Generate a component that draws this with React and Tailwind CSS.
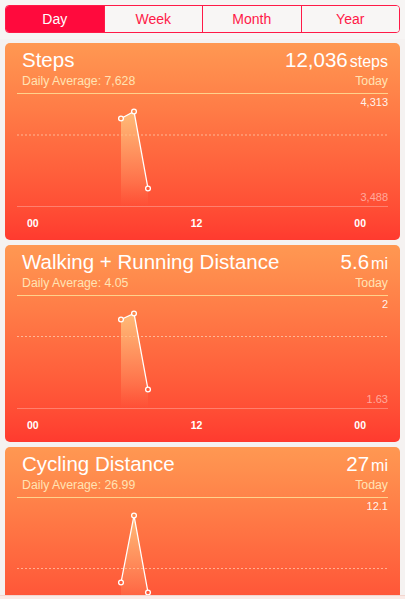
import React from "react";

const cards = [
  {
    title: "Steps",
    avg: "Daily Average: 7,628",
    value: "12,036",
    unit: "steps",
    max: "4,313",
    min: "3,488",
    pts: [
      [104, 24.5, "#ff8a4c"],
      [117, 17.5, "#ff8c4d"],
      [131, 94.5, "#ff5a3a"],
    ],
    dash: 41,
  },
  {
    title: "Walking + Running Distance",
    avg: "Daily Average: 4.05",
    value: "5.6",
    unit: "mi",
    max: "2",
    min: "1.63",
    pts: [
      [104, 23.5, "#ff8a4c"],
      [117, 17.5, "#ff8c4d"],
      [131, 93.5, "#ff5a3a"],
    ],
    dash: 40.5,
  },
  {
    title: "Cycling Distance",
    avg: "Daily Average: 26.99",
    value: "27",
    unit: "mi",
    max: "12.1",
    min: "",
    pts: [
      [104, 84.5, "#ff5f3c"],
      [117, 17.5, "#ff8c4d"],
      [131, 94.5, "#ff5a3a"],
    ],
    dash: 70.5,
  },
];

function Chart({ pts, dash, id }) {
  const line = pts.map((p) => `${p[0]},${p[1]}`).join(" ");
  const area = `${pts[0][0]},112 ${line} ${pts[pts.length - 1][0]},112`;
  return (
    <svg
      className="absolute inset-0"
      width="371"
      height="113"
      viewBox="0 0 371 113"
    >
      <defs>
        <linearGradient id={`g${id}`} x1="0" y1="0" x2="0" y2="1">
          <stop offset="0" stopColor="#ffc680" stopOpacity="0.85" />
          <stop offset="0.75" stopColor="#ffb27a" stopOpacity="0.25" />
          <stop offset="1" stopColor="#ffa070" stopOpacity="0" />
        </linearGradient>
      </defs>
      <line
        x1="0"
        y1={dash}
        x2="371"
        y2={dash}
        stroke="rgba(255,240,220,0.55)"
        strokeWidth="1"
        strokeDasharray="2 2"
      />
      <polygon points={area} fill={`url(#g${id})`} />
      <polyline points={line} fill="none" stroke="#ffffff" strokeWidth="1.3" />
      {pts.map((p, i) => (
        <circle
          key={i}
          cx={p[0]}
          cy={p[1]}
          r="2.4"
          fill={p[2]}
          stroke="#ffffff"
          strokeWidth="1.3"
        />
      ))}
    </svg>
  );
}

function Card({ c, id }) {
  return (
    <div className="shrink-0 h-[197px] rounded-[5px] bg-linear-to-b from-[#ff9852] via-[#ff6d41] to-[#ff3a2f] flex flex-col">
      <div className="mx-3 pt-[7px] pb-[5px] border-b border-[#ffd28c]">
        <div className="flex items-baseline justify-between pl-[5px]">
          <span className="text-[20.5px] leading-[20px] text-white">{c.title}</span>
          <span className="flex items-baseline gap-[2px] text-white">
            <span className="text-[20.5px] leading-[20px]">{c.value}</span>
            <span className="text-[16px] leading-[20px]">{c.unit}</span>
          </span>
        </div>
        <div className="mt-[2px] flex justify-between pl-[5px] text-[12.3px] leading-[14px] text-[#ffe3b4]">
          <span>{c.avg}</span>
          <span>Today</span>
        </div>
      </div>
      <div className="mx-3 relative h-[113px] border-b border-[rgba(255,255,255,0.28)] flex flex-col justify-between items-end pt-[3px] pb-[3px]">
        <Chart pts={c.pts} dash={c.dash} id={id} />
        <span className="relative text-[11px] leading-[11px] text-[rgba(255,255,255,0.92)]">
          {c.max}
        </span>
        <span className="relative text-[11px] leading-[11px] text-[rgba(255,255,255,0.5)]">
          {c.min}
        </span>
      </div>
      <div className="flex-1 flex items-center justify-between pl-[22px] pr-[34px] text-[10.5px] font-bold text-white">
        <span>00</span>
        <span>12</span>
        <span>00</span>
      </div>
    </div>
  );
}

export default function App() {
  const tabs = ["Day", "Week", "Month", "Year"];
  return (
    <div
      className="w-[405px] h-[599px] overflow-hidden bg-[#f5f2f1] flex flex-col"
      style={{ fontFamily: '"Liberation Sans", Arial, sans-serif' }}
    >
      <div className="flex-1 overflow-hidden flex flex-col">
        <div className="pt-[5px] px-[5px] bg-[#f7f5f4]">
          <div className="h-[28px] flex rounded-[4px] border border-[#ff1a47] overflow-hidden">
            {tabs.map((t, i) => (
              <div
                key={t}
                className={
                  i === 0
                    ? "flex-1 flex items-center justify-center bg-[#ff0a3d] text-white text-[14px]"
                    : "flex-1 flex items-center justify-center border-l border-[#ff1a47] bg-[#f8f6f5] text-[#ff1a47] text-[14px]"
                }
              >
                {t}
              </div>
            ))}
          </div>
          <div className="h-[6px]" />
        </div>
        <div className="h-px bg-[#dfdad8]" />
        <div className="flex flex-col gap-[5px] px-[5px] pt-[4px]">
          {cards.map((c, i) => (
            <Card key={i} c={c} id={i} />
          ))}
        </div>
      </div>
      <div className="h-[4px] shrink-0 bg-[#fbeae6] border-t border-[#f3d6cf]" />
    </div>
  );
}
